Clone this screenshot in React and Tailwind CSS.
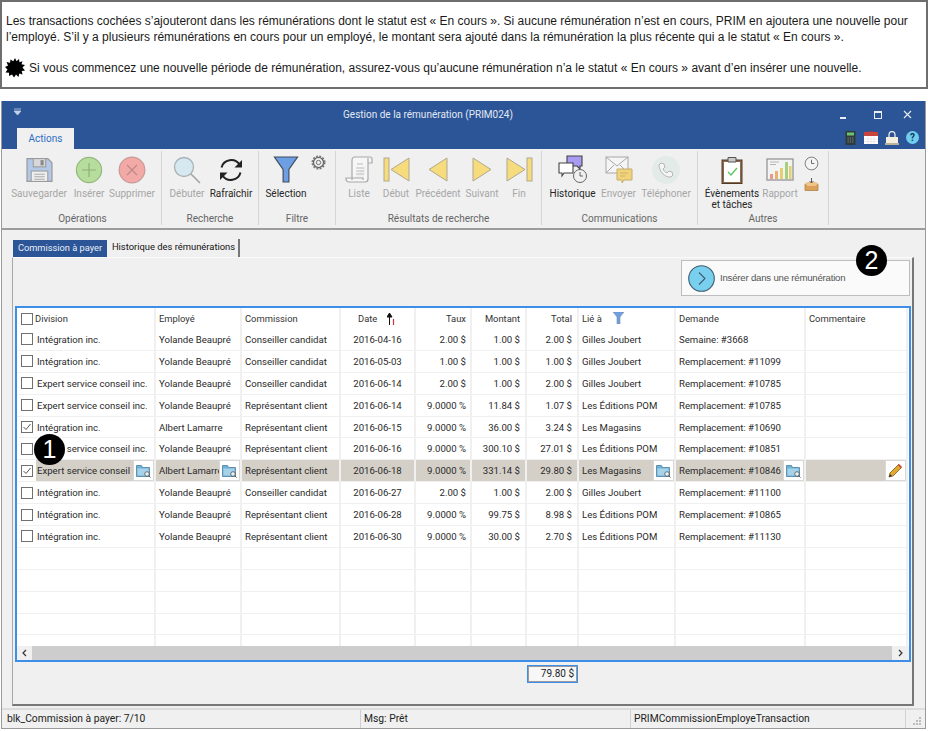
import React from "react";

const Floppy = () => (
  <svg width="27" height="26" viewBox="1 2 26 24"><path d="M2 3h20l4 4v18H2z" fill="#b4c9e8" stroke="#9a9a9a" strokeWidth="1.2"/><rect x="8" y="3" width="12" height="8" fill="#d8d8d8" stroke="#9a9a9a"/><rect x="15" y="4.5" width="3" height="5" fill="#8a8a8a"/><rect x="6" y="15" width="16" height="10" fill="#eee" stroke="#9a9a9a"/><path d="M9 18h10M9 20.5h10M9 23h10" stroke="#aaa"/></svg>
);
const PlusC = () => (
  <svg width="28" height="28" viewBox="0 0 28 28"><circle cx="14" cy="14" r="12.6" fill="#b7dd9c" stroke="#94b87e" strokeWidth="1.2"/><path d="M14 7v14M7 14h14" stroke="#8fae7a" strokeWidth="1.2"/></svg>
);
const XC = () => (
  <svg width="28" height="28" viewBox="0 0 28 28"><circle cx="14" cy="14" r="12.8" fill="#f3aaa6" stroke="#c79a97" strokeWidth="1.2"/><path d="M9 9l10 10M19 9L9 19" stroke="#b98a88" strokeWidth="1.2"/></svg>
);
const Magnifier = () => (
  <svg width="28" height="28" viewBox="0 0 28 28"><circle cx="11" cy="11" r="9.5" fill="#d6e9f0" stroke="#a9b2b6" strokeWidth="1.3"/><path d="M18 18l9 9" stroke="#a0a0a0" strokeWidth="1.5"/></svg>
);
const Refresh = () => (
  <svg width="26" height="26" viewBox="0 0 26 26" fill="none"><path d="M3.5 10.5A10 10 0 0 1 21.5 7.5" stroke="#222" strokeWidth="2"/><path d="M24 3v7.5h-7.5z" fill="#222"/><path d="M22.5 15.5A10 10 0 0 1 4.5 18.5" stroke="#222" strokeWidth="2"/><path d="M2 23v-7.5h7.5z" fill="#222"/></svg>
);
const Funnel = () => (
  <svg width="26" height="27" viewBox="0 0 26 28"><path d="M1 1h24L16 14v13h-6V14z" fill="#6f9fe3" stroke="#3c4a5c" strokeWidth="1.2"/></svg>
);
const Gear = () => (
  <svg width="15" height="15" viewBox="0 0 16 16" fill="none"><circle cx="8" cy="8" r="5.4" stroke="#666" strokeWidth="1.4"/><circle cx="8" cy="8" r="2.3" stroke="#666"/><circle cx="8" cy="8" r="6.6" stroke="#777" strokeWidth="1.8" strokeDasharray="2 1.46"/></svg>
);
const Scroll = () => (
  <svg width="28" height="28" viewBox="0 0 28 28" fill="none" stroke="#a8a8a8" strokeWidth="1.2"><path d="M7 24V4a3 3 0 0 1 3-3h15a2 2 0 0 1 2 2v4h-4M23 2v21a3 3 0 0 1-3 3H4a3 3 0 0 1-3-3v-1h17v2" fill="#f6f6f6"/><path d="M12 8h6M11 12h8M11 15h8M11 18h8" stroke="#bbb"/></svg>
);
const Y = "#f6dc7c", YS = "#b0a890";
const First = () => (
  <svg width="27" height="25" viewBox="0 0 27 25"><rect x="1" y="1" width="5" height="23" fill={Y} stroke={YS}/><path d="M26 1v23L8 12.5z" fill={Y} stroke={YS}/></svg>
);
const Prev = () => (
  <svg width="20" height="25" viewBox="0 0 20 25"><path d="M19 1v23L1 12.5z" fill={Y} stroke={YS}/></svg>
);
const Next = () => (
  <svg width="20" height="25" viewBox="0 0 20 25"><path d="M1 1v23l18-11.500z" fill={Y} stroke={YS}/></svg>
);
const Last = () => (
  <svg width="27" height="25" viewBox="0 0 27 25"><rect x="21" y="1" width="5" height="23" fill={Y} stroke={YS}/><path d="M1 1v23l18-11.500z" fill={Y} stroke={YS}/></svg>
);
const Chat = () => (
  <svg width="30" height="29" viewBox="0 0 30 29"><path d="M9 1h15v10h-2v3l-3-3H9z" fill="#a99bf2" stroke="#444" strokeWidth="1.100"/><path d="M1 8h14v10H6l-2 3v-3H1z" fill="#fff" stroke="#444" strokeWidth="1.100"/><circle cx="22" cy="21" r="6.500" fill="#f0f0f0" stroke="#666"/><path d="M22 17v4h3" stroke="#666" fill="none"/></svg>
);
const Mail = () => (
  <svg width="28" height="27" viewBox="0 0 28 27"><rect x="1" y="1" width="22" height="16" fill="#f5f5f5" stroke="#a8a8a8"/><path d="M1 1l11 9 11-9M1 17l8-8M23 17l-8-8" stroke="#a8a8a8" fill="none"/><path d="M12 13h15v11h-8l-2 3v-3h-5z" fill="#f0d37a" stroke="#c4ad6c"/><path d="M15 17h8M15 20h5" stroke="#cdb468"/></svg>
);
const Phone = () => (
  <svg width="28" height="28" viewBox="0 0 28 28"><circle cx="14" cy="14" r="14" fill="#e3ebe9"/><path d="M9 7l3 1 1 3-2 2c1 2 2 3 4 4l2-2 3 1 1 3-2 2C13 22 7 15 7 9z" fill="#f5f5f5" stroke="#b5b5b5"/></svg>
);
const Clipboard = () => (
  <svg width="22" height="28" viewBox="0 0 22 28"><rect x="1" y="4" width="20" height="23.500" fill="#8d6a4c" stroke="#4f3a2a"/><rect x="3" y="6" width="16" height="20" fill="#fff"/><path d="M7 1.500h8V6H7z" fill="#c9c9c9" stroke="#555"/><path d="M7 16l3 3 6-7" stroke="#5cc45c" fill="none" strokeWidth="1.300"/></svg>
);
const Chart = () => (
  <svg width="28" height="23" viewBox="0 0 28 23"><rect x="1" y="1" width="26" height="21" fill="#f3f3f3" stroke="#9c9c9c" strokeWidth="1.400"/><path d="M4 4h9M4 6.500h6" stroke="#b5b5b5"/><rect x="4" y="16" width="3" height="5" fill="#e59a90"/><rect x="9" y="13" width="3" height="8" fill="#e8b26e"/><rect x="14" y="10" width="3" height="11" fill="#e6cf72"/><rect x="19" y="4" width="3" height="17" fill="#a7cf82"/><rect x="23" y="8" width="2.500" height="13" fill="#e6cf72"/></svg>
);
const Clock = () => (
  <svg width="15" height="15" viewBox="0 0 16 16" fill="none"><circle cx="8" cy="8" r="6.800" fill="#f4f4f4" stroke="#777"/><path d="M8 4v4h3" stroke="#666"/></svg>
);
const Inbox = () => (
  <svg width="15" height="13" viewBox="0 0 15 13"><path d="M1 6h13v6.500H1z" fill="#dca05a" stroke="#a87a3e" strokeWidth=".7"/><path d="M1 6l2-2h9l2 2-3 2H4z" fill="#f0c48a"/><path d="M7.500 0v5M5.500 3l2 2 2-2" stroke="#5c5c5c" fill="none"/></svg>
);

const RB = ({ w, label, on, icon }) => (
  <div className="flex flex-col items-center shrink-0" style={{ width: w }}>
    <div className="mt-[3px] h-[31px] flex items-center justify-center">{icon}</div>
    <div className={`mt-[3px] text-center leading-[11px] whitespace-pre ${on ? "text-[#262626]" : "text-[#a6a6a6]"}`}>{label}</div>
  </div>
);

const Group = ({ w, title, pl, children }) => (
  <div className="h-full shrink-0 border-r border-[#d6d6d6] flex flex-col" style={{ width: w }}>
    <div className="flex h-[61px] shrink-0" style={{ paddingLeft: pl }}>{children}</div>
    <div className="text-center text-[#666] leading-[12px] mt-[1px]">{title}</div>
  </div>
);

const Folder = () => (
  <div className="absolute top-0 right-0 w-[21px] h-[21px] bg-white border border-[#d8d8d8] flex items-center justify-center">
    <svg width="15" height="14" viewBox="0 0 15 14"><path d="M.5 1.500h5l1 2h7v9H.5z" fill="#6fb2d8" stroke="#4a7f9e" strokeWidth=".8"/><rect x="1.500" y="4.500" width="11" height="7" fill="#a6d3ea"/><circle cx="11" cy="10" r="2.300" fill="#e6f1f5" stroke="#555" strokeWidth=".8"/><path d="M12.700 11.700L14.500 13.500" stroke="#555"/></svg>
  </div>
);

const rows = [
  [false, "Intégration inc.", "Yolande Beaupré", "Conseiller candidat", "2016-04-16", "2.00 $", "1.00 $", "2.00 $", "Gilles Joubert", "Semaine: #3668"],
  [false, "Intégration inc.", "Yolande Beaupré", "Conseiller candidat", "2016-05-03", "1.00 $", "1.00 $", "1.00 $", "Gilles Joubert", "Remplacement: #11099"],
  [false, "Expert service conseil inc.", "Yolande Beaupré", "Conseiller candidat", "2016-06-14", "2.00 $", "1.00 $", "2.00 $", "Gilles Joubert", "Remplacement: #10785"],
  [false, "Expert service conseil inc.", "Yolande Beaupré", "Représentant client", "2016-06-14", "9.0000 %", "11.84 $", "1.07 $", "Les Éditions POM", "Remplacement: #10785"],
  [true, "Intégration inc.", "Albert Lamarre", "Représentant client", "2016-06-15", "9.0000 %", "36.00 $", "3.24 $", "Les Magasins", "Remplacement: #10690"],
  [false, "Expert service conseil inc.", "Yolande Beaupré", "Représentant client", "2016-06-16", "9.0000 %", "300.10 $", "27.01 $", "Les Éditions POM", "Remplacement: #10851"],
  [true, "Expert service conseil inc.", "Albert Lamarre", "Représentant client", "2016-06-18", "9.0000 %", "331.14 $", "29.80 $", "Les Magasins", "Remplacement: #10846"],
  [false, "Intégration inc.", "Yolande Beaupré", "Conseiller candidat", "2016-06-27", "2.00 $", "1.00 $", "2.00 $", "Gilles Joubert", "Remplacement: #11100"],
  [false, "Intégration inc.", "Yolande Beaupré", "Représentant client", "2016-06-28", "9.0000 %", "99.75 $", "8.98 $", "Les Éditions POM", "Remplacement: #10865"],
  [false, "Intégration inc.", "Yolande Beaupré", "Représentant client", "2016-06-30", "9.0000 %", "30.00 $", "2.70 $", "Les Éditions POM", "Remplacement: #11130"],
  null, null, null, null, null,
];

const COLS = "grid grid-cols-[139px_86px_99px_75px_56px_55px_52px_97px_130px_102px]";

const Check = ({ on }) => (
  <div className="w-[12px] h-[12px] border border-[#707070] bg-white shrink-0 flex items-center justify-center">
    {on ? <svg width="10" height="10" viewBox="0 0 10 10" fill="none"><path d="M1.500 5l2.500 2.500L8.500 2" stroke="#555" strokeWidth="1"/></svg> : null}
  </div>
);

const Row = ({ r, i }) => {
  const sel = i === 6;
  const c = `h-[21.9px] leading-[21px] border-r-2 border-b border-[#f0f0f0] whitespace-nowrap overflow-hidden ${sel ? "bg-[#d4d0c8]" : ""}`;
  if (!r)
    return (
      <div className={COLS}>
        {Array.from({ length: 10 }).map((_, k) => (
          <div key={k} className="h-[21.9px] border-r-2 border-b border-[#f0f0f0]" />
        ))}
      </div>
    );
  return (
    <div className={`${COLS} text-[#2a2a2a] text-[9.6px]`}>
      <div className="relative h-[21.9px] flex items-center border-r-2 border-b border-[#f0f0f0] pl-[4px]">
        <Check on={r[0]} />
        <div className={`ml-[3px] flex-1 pl-[1px] h-[21px] leading-[21px] whitespace-nowrap overflow-hidden ${sel ? "bg-[#d4d0c8]" : ""}`}>{r[1]}</div>
        {sel ? <Folder /> : null}
      </div>
      <div className={`relative pl-[3px] ${c}`}>{r[2]}{sel ? <Folder /> : null}</div>
      <div className={`pl-[3px] ${c}`}>{r[3]}</div>
      <div className={`text-center ${c}`}>{r[4]}</div>
      <div className={`text-right pr-[4px] ${c}`}>{r[5]}</div>
      <div className={`text-right pr-[5px] ${c}`}>{r[6]}</div>
      <div className={`text-right pr-[5px] ${c}`}>{r[7]}</div>
      <div className={`relative pl-[3px] ${c}`}>{r[8]}{sel ? <Folder /> : null}</div>
      <div className={`relative pl-[3px] ${c}`}>{r[9]}{sel ? <Folder /> : null}</div>
      <div className={`relative ${c}`}>
        {sel ? (
          <div className="absolute top-0 right-0 w-[21px] h-[21px] bg-white border border-[#d8d8d8] flex items-center justify-center">
            <svg width="15" height="15" viewBox="0 0 15 15"><path d="M1 14l1-4 8.500-8.500 3 3L5 13z" fill="#e3a92f" stroke="#7a5a20" strokeWidth=".8"/><path d="M10.500 1.500l3 3" stroke="#c0392b" strokeWidth="1.500"/><path d="M1 14l1-3 2 2z" fill="#333"/></svg>
          </div>
        ) : null}
      </div>
    </div>
  );
};

const Hd = ({ className = "", children }) => (
  <div className={`h-[21px] leading-[21px] border-r-2 border-[#f0f0f0] whitespace-nowrap ${className}`}>{children}</div>
);

export default function App() {
  return (
    <div className="relative w-[928px] h-[731px] overflow-hidden bg-white font-['Roboto',sans-serif] text-[10px]">
      {/* note */}
      <div className="h-[89px] border-2 border-[#6e6e6e] pl-[4px] pt-[11px] font-['Liberation_Sans',sans-serif] text-[12px] leading-[16px] text-[#1a1a1a] whitespace-nowrap">
        <div>Les transactions cochées s’ajouteront dans les rémunérations dont le statut est « En cours ». Si aucune rémunération n’est en cours, PRIM en ajoutera une nouvelle pour</div>
        <div>l’employé. S’il y a plusieurs rémunérations en cours pour un employé, le montant sera ajouté dans la rémunération la plus récente qui a le statut « En cours ».</div>
        <div className="flex items-center mt-[13px]">
          <svg width="20" height="20" viewBox="0 0 20 20" className="ml-[-1px] mr-[4px]">
            <polygon fill="#000" points="10,0 11.600,3.200 14,1 14.500,4.300 17.500,3.200 16.500,6.300 20,7 17.500,9.500 20,12.500 16.700,13 17.500,16.500 14.300,15.500 13.500,19 11,16.500 9,19.500 7,16.500 4,18 4,14.700 .5,14.500 2.500,11.500 0,9 3,7.500 1.500,4 5,4.700 5.500,1.500 8.300,3.200" />
          </svg>
          <span>Si vous commencez une nouvelle période de rémunération, assurez-vous qu’aucune rémunération n’a le statut « En cours » avant d’en insérer une nouvelle.</span>
        </div>
      </div>

      {/* window */}
      <div className="mt-[12px] ml-[1px] w-[925px] h-[628px] flex flex-col bg-[#f0f0f0] border-x border-b border-[#9a9a9a]">
        {/* title */}
        <div className="h-[48px] bg-[#2b5597] flex flex-col shrink-0">
          <div className="h-[27px] flex">
            <div className="w-[29px] pl-[12px] pt-[7px]">
              <svg width="7" height="8" viewBox="0 0 7 8"><path d="M0 1h7M0 3h7L3.500 7z" stroke="#c5d2e6" fill="#c5d2e6" strokeWidth=".8"/></svg>
            </div>
            <div className="flex-1 text-center text-[#e3e9f3] text-[10px] leading-[28px]">Gestion de la rémunération (PRIM024)</div>
            <div className="w-[100px] flex items-center text-white">
              <div className="w-[36px] flex justify-center pt-[6px]"><div className="w-[6px] h-[2px] bg-[#e8eef6]" /></div>
              <div className="w-[34px] flex justify-center"><div className="w-[8px] h-[8px] border border-[#e8eef6] border-t-2" /></div>
              <div className="w-[24px] flex justify-center">
                <svg width="9" height="9" viewBox="0 0 9 9"><path d="M1 1l7 7M8 1L1 8" stroke="#e8eef6" strokeWidth="1.100"/></svg>
              </div>
            </div>
          </div>
          <div className="h-[21px] flex justify-between">
            <div className="ml-[15px] w-[57px] h-[21px] bg-[#f0f0f0] text-center text-[#2d6fc6] text-[10px] leading-[21px]">Actions</div>
            <div className="flex items-center gap-[7px] pr-[6px] pb-[2px]">
              <svg width="13" height="14" viewBox="0 0 10 14"><rect width="10" height="14" fill="#2f3b3a"/><rect x="1.500" y="1.500" width="7" height="3" fill="#6fc16f"/><path d="M2 7h6M2 9h6M2 11h6" stroke="#7a8886" strokeDasharray="1.300 1"/></svg>
              <svg width="14" height="13" viewBox="0 0 14 13"><rect y="1" width="14" height="12" fill="#fff"/><path d="M0 1h14v4H0z" fill="#c9443c"/><path d="M5 1l2-1 2 1" stroke="#c9443c"/><path d="M0 8h14M0 10.500h14M4 5v8M7 5v8M10 5v8" stroke="#d8d8d8" strokeWidth=".5"/></svg>
              <svg width="14" height="14" viewBox="0 0 14 14"><rect x="1" y="6" width="12" height="7" fill="#f4efdd"/><rect y="12" width="14" height="2" fill="#b9b39c"/><path d="M4 6V3.500a3 3 0 0 1 6 0V6" fill="none" stroke="#e6e6e6" strokeWidth="1.300"/></svg>
              <div className="w-[13px] h-[13px] rounded-full bg-[#6fcdf0] text-[#14384d] text-[10px] font-bold leading-[13px] text-center">?</div>
            </div>
          </div>
        </div>

        {/* ribbon */}
        <div className="h-[81px] shrink-0 flex pl-[2px] pt-[2px] pb-[3px] border-b-2 border-[#9c9c9c]">
          <Group w={158} title="Opérations" pl={5}>
            <RB w={60} label="Sauvegarder" icon={<Floppy />} />
            <RB w={40} label="Insérer" icon={<PlusC />} />
            <RB w={46} label="Supprimer" icon={<XC />} />
          </Group>
          <Group w={97} title="Recherche" pl={4}>
            <RB w={42} label="Débuter" icon={<Magnifier />} />
            <RB w={46} on label="Rafraîchir" icon={<Refresh />} />
          </Group>
          <Group w={77} title="Filtre" pl={3}>
            <RB w={48} on label="Sélection" icon={<Funnel />} />
            <div className="pl-[1px] pt-[4px]"><Gear /></div>
          </Group>
          <Group w={206} title="Résultats de recherche" pl={4}>
            <RB w={38} label="Liste" icon={<Scroll />} />
            <RB w={36} label="Début" icon={<First />} />
            <RB w={48} label="Précédent" icon={<Prev />} />
            <RB w={40} label="Suivant" icon={<Next />} />
            <RB w={34} label="Fin" icon={<Last />} />
          </Group>
          <Group w={156} title="Communications" pl={6}>
            <RB w={49} on label="Historique" icon={<Chat />} />
            <RB w={43} label="Envoyer" icon={<Mail />} />
            <RB w={52} label="Téléphoner" icon={<Phone />} />
          </Group>
          <Group w={131} title="Autres" pl={6}>
            <RB w={56} on label={"Évènements\net tâches"} icon={<Clipboard />} />
            <RB w={40} label="Rapport" icon={<Chart />} />
            <div className="w-[22px] flex flex-col items-center gap-[7px] pt-[5px]"><Clock /><Inbox /></div>
          </Group>
        </div>

        {/* content */}
        <div className="flex-1 flex flex-col pl-[10px] pr-[11px] pt-[8px] min-h-0">
          <div className="flex h-[19px] shrink-0 pl-[1px] items-end">
            <div className="w-[94px] h-[17px] bg-[#2b5597] text-[#e8eef6] text-center leading-[16px] text-[9.25px] whitespace-nowrap">Commission à payer</div>
            <div className="ml-[2px] w-[131px] h-[18px] border-r-2 border-[#777] text-[#111] text-center leading-[16px] text-[9.4px] whitespace-nowrap">Historique des rémunérations</div>
          </div>
          <div className="h-[449px] border-l border-t border-t-[#fafafa] border-l-[#a8a8a8] border-r-2 border-r-[#777] border-b-2 border-b-[#777] flex flex-col shrink-0">
            <div className="flex justify-end pr-[2px] pt-[2px]">
              <div className="w-[229px] h-[36px] bg-[#fafafa] border border-[#bdbdbd] flex items-center pl-[6px]">
                <svg width="27" height="27" viewBox="0 0 27 27"><circle cx="13.500" cy="13.500" r="12.800" fill="#78d0ee" stroke="#3f5d70" strokeWidth="1.100"/><path d="M11 7.500l6 6-6 6" fill="none" stroke="#3f5d70" strokeWidth="1.100"/></svg>
                <span className="ml-[5px] font-['Liberation_Sans',sans-serif] text-[9.6px] tracking-[-0.2px] text-[#555]">Insérer dans une rémunération</span>
              </div>
            </div>

            {/* grid */}
            <div className="mt-[10px] ml-[2px] w-[896px] h-[356px] border-2 border-[#3c8fe8] bg-white flex flex-col overflow-hidden">
              <div className={`${COLS} text-[#333] text-[9.4px]`}>
                <Hd className="flex items-center pl-[4px]"><Check /><span className="ml-[2px]">Division</span></Hd>
                <Hd className="pl-[3px]">Employé</Hd>
                <Hd className="pl-[3px]">Commission</Hd>
                <Hd className="flex items-center pl-[17px]">
                  <span>Date</span>
                  <svg width="8" height="12" viewBox="0 0 8 12" className="ml-[10px]"><path d="M2.500 12V4M0 4l2.500-4L5 4z" stroke="#111" fill="#111"/><path d="M6.500 6v6" stroke="#d03030" strokeWidth="1.200"/></svg>
                </Hd>
                <Hd className="text-right pr-[4px]">Taux</Hd>
                <Hd className="text-right pr-[5px]">Montant</Hd>
                <Hd className="text-right pr-[5px]">Total</Hd>
                <Hd className="flex items-center pl-[3px]">
                  <span>Lié à</span>
                  <svg width="11" height="12" viewBox="0 0 11 12" className="ml-[11px] mb-[2px]"><path d="M0 0h11L7 5v7H4V5z" fill="#6f9fe3" stroke="#7b8ea6" strokeWidth=".6"/></svg>
                </Hd>
                <Hd className="pl-[3px]">Demande</Hd>
                <Hd className="pl-[3px]">Commentaire</Hd>
              </div>
              <div className="flex-1 overflow-hidden min-h-0">
                {rows.map((r, i) => <Row key={i} r={r} i={i} />)}
              </div>
              <div className="h-[14px] shrink-0 flex items-center bg-[#f0f0f0]">
                <div className="w-[15px] flex justify-center">
                  <svg width="5" height="8" viewBox="0 0 5 8"><path d="M4 1L1 4l3 3" fill="none" stroke="#333" strokeWidth="1.200"/></svg>
                </div>
                <div className="flex-1 h-full bg-[#cdcdcd]" />
                <div className="w-[17px] flex justify-center">
                  <svg width="5" height="8" viewBox="0 0 5 8"><path d="M1 1l3 3-3 3" fill="none" stroke="#333" strokeWidth="1.200"/></svg>
                </div>
              </div>
            </div>

            {/* total */}
            <div className="mt-[3px] ml-[514px] w-[51px] h-[18px] border border-[#3c8fe8] bg-[#f7f7f7] outline outline-1 outline-[#9a9a9a] outline-offset-[-2px] text-right pr-[3px] leading-[16px] text-[#222]">79.80 $</div>
          </div>
        </div>

        {/* status */}
        <div className="h-[20px] shrink-0 flex items-center border-t-2 border-[#dcdcdc] text-[#222] text-[10.3px]">
          <div className="w-[359px] pl-[5px] h-full leading-[18px] border-r border-[#d0d0d0]">blk_Commission à payer: 7/10</div>
          <div className="w-[270px] pl-[3px] h-full leading-[18px] border-r border-[#d0d0d0]">Msg: Prêt</div>
          <div className="w-[275px] pl-[3px] h-full leading-[18px] border-r border-[#d0d0d0]">PRIMCommissionEmployeTransaction</div>
          <div className="flex-1 flex justify-end items-end h-full pr-[4px] pb-[3px]">
            <svg width="8" height="8" viewBox="0 0 8 8" fill="#bbb"><rect x="6" y="0" width="2" height="2"/><rect x="3" y="3" width="2" height="2"/><rect x="6" y="3" width="2" height="2"/><rect x="0" y="6" width="2" height="2"/><rect x="3" y="6" width="2" height="2"/><rect x="6" y="6" width="2" height="2"/></svg>
          </div>
        </div>
      </div>

      {/* callouts */}
      <div className="absolute left-[34px] top-[434px] w-[31px] h-[31px] rounded-full bg-black text-white text-center font-['Liberation_Sans',sans-serif] text-[25px] leading-[31px]">1</div>
      <div className="absolute left-[856px] top-[245px] w-[31px] h-[31px] rounded-full bg-black text-white text-center font-['Liberation_Sans',sans-serif] text-[25px] leading-[31px]">2</div>
    </div>
  );
}
